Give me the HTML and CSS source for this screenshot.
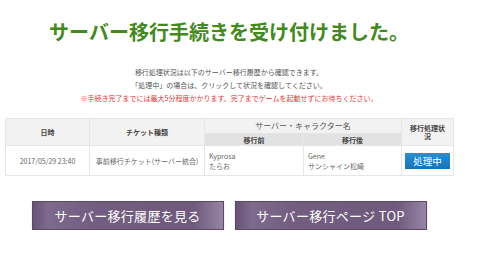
FILE: index.html
```html
<!DOCTYPE html>
<html lang="ja">
<head>
  <meta charset="UTF-8">
  <title>サーバー移行手続き完了</title>
  <link rel="stylesheet" href="styles.css">
</head>
<body>
  <div class="wrap">
    <h1>サーバー移行手続きを受け付けました。</h1>

    <div class="info">
      <p>移行処理状況は以下のサーバー移行履歴から確認できます。</p>
      <p>「処理中」の場合は、クリックして状況を確認してください。</p>
      <p class="alert">※手続き完了までには最大5分程度かかります。完了までゲームを起動せずにお待ちください。</p>
    </div>

    <table class="rireki">
      <colgroup>
        <col class="c-date">
        <col class="c-ticket">
        <col class="c-before">
        <col class="c-after">
        <col class="c-status">
      </colgroup>
      <tr class="head">
        <th rowspan="2">日時</th>
        <th rowspan="2">チケット種類</th>
        <th colspan="2" class="chara">サーバー・キャラクター名</th>
        <th rowspan="2">移行処理状況</th>
      </tr>
      <tr class="sub">
        <th>移行前</th>
        <th>移行後</th>
      </tr>
      <tr class="data">
        <td>2017/05/29 23:40</td>
        <td class="ticket">事前移行チケット(サーバー統合)</td>
        <td class="name">Kyprosa<br>たらお</td>
        <td class="name">Gene<br>サンシャイン松崎</td>
        <td><a class="status" href="#">処理中</a></td>
      </tr>
    </table>

    <div class="btns">
      <a class="btn" href="#">サーバー移行履歴を見る</a>
      <a class="btn" href="#">サーバー移行ページ TOP</a>
    </div>
  </div>
</body>
</html>
```

FILE: styles.css
```css
body {
  margin: 0;
  background: #fff;
  font-family: "Noto Sans CJK JP", "Noto Sans", sans-serif;
  color: #555;
}

.wrap {
  width: 448px;
  margin-left: 5px;
}

h1 {
  margin: 0;
  padding-top: 20px;
  font-size: 20px;
  line-height: 24px;
  font-weight: bold;
  color: #428a1c;
  text-align: center;
}

.info {
  margin-top: 22px;
  text-align: center;
  font-size: 7px;
  line-height: 13px;
}

.info p {
  margin: 0;
}

.info .alert {
  color: #e23a3a;
}

/* 履歴テーブル */
.rireki {
  margin-top: 13px;
  width: 448px;
  border-collapse: collapse;
  table-layout: fixed;
  font-size: 7px;
}

.c-date { width: 84px; }
.c-ticket { width: 115px; }
.c-before { width: 99px; }
.c-after { width: 98px; }
.c-status { width: 52px; }

.rireki th,
.rireki td {
  border: 1px solid #e6e6e6;
  padding: 0 6px;
  text-align: center;
}

.rireki th {
  background: #f2f2f2;
  color: #444;
  font-weight: bold;
  line-height: 8px;
}

.rireki .head th {
  height: 14px;
}

.rireki .head .chara {
  font-size: 8px;
  font-weight: normal;
  color: #555;
}

.rireki .sub th {
  height: 11px;
  background: #e2e2e2;
}

.rireki td {
  height: 29px;
  color: #666;
  background: #fff;
}

.rireki td.ticket {
  padding: 0 1px;
  white-space: nowrap;
}

.rireki td.name {
  text-align: left;
  padding-left: 4px;
  line-height: 10px;
}

.status {
  display: block;
  width: 45px;
  height: 16px;
  margin-left: -3px;
  line-height: 16px;
  background: linear-gradient(#2a8fd2, #1673b6);
  color: #fff;
  font-size: 9.5px;
  text-decoration: none;
  text-align: center;
}

/* ボタン */
.btns {
  margin-top: 25px;
  display: flex;
  justify-content: center;
  gap: 11px;
}

.btn {
  display: block;
  width: 190px;
  height: 27px;
  line-height: 27px;
  border: 1px solid #5b4868;
  background: linear-gradient(to right, #685376, #7e6a8c 8%, #735e81 30%, #6f5a7d 85%, #9885a5 100%);
  box-shadow: 0 1px 2px rgba(0,0,0,0.15);
  color: #fff;
  font-size: 13px;
  text-align: center;
  text-decoration: none;
  letter-spacing: 0.3px;
}
```
